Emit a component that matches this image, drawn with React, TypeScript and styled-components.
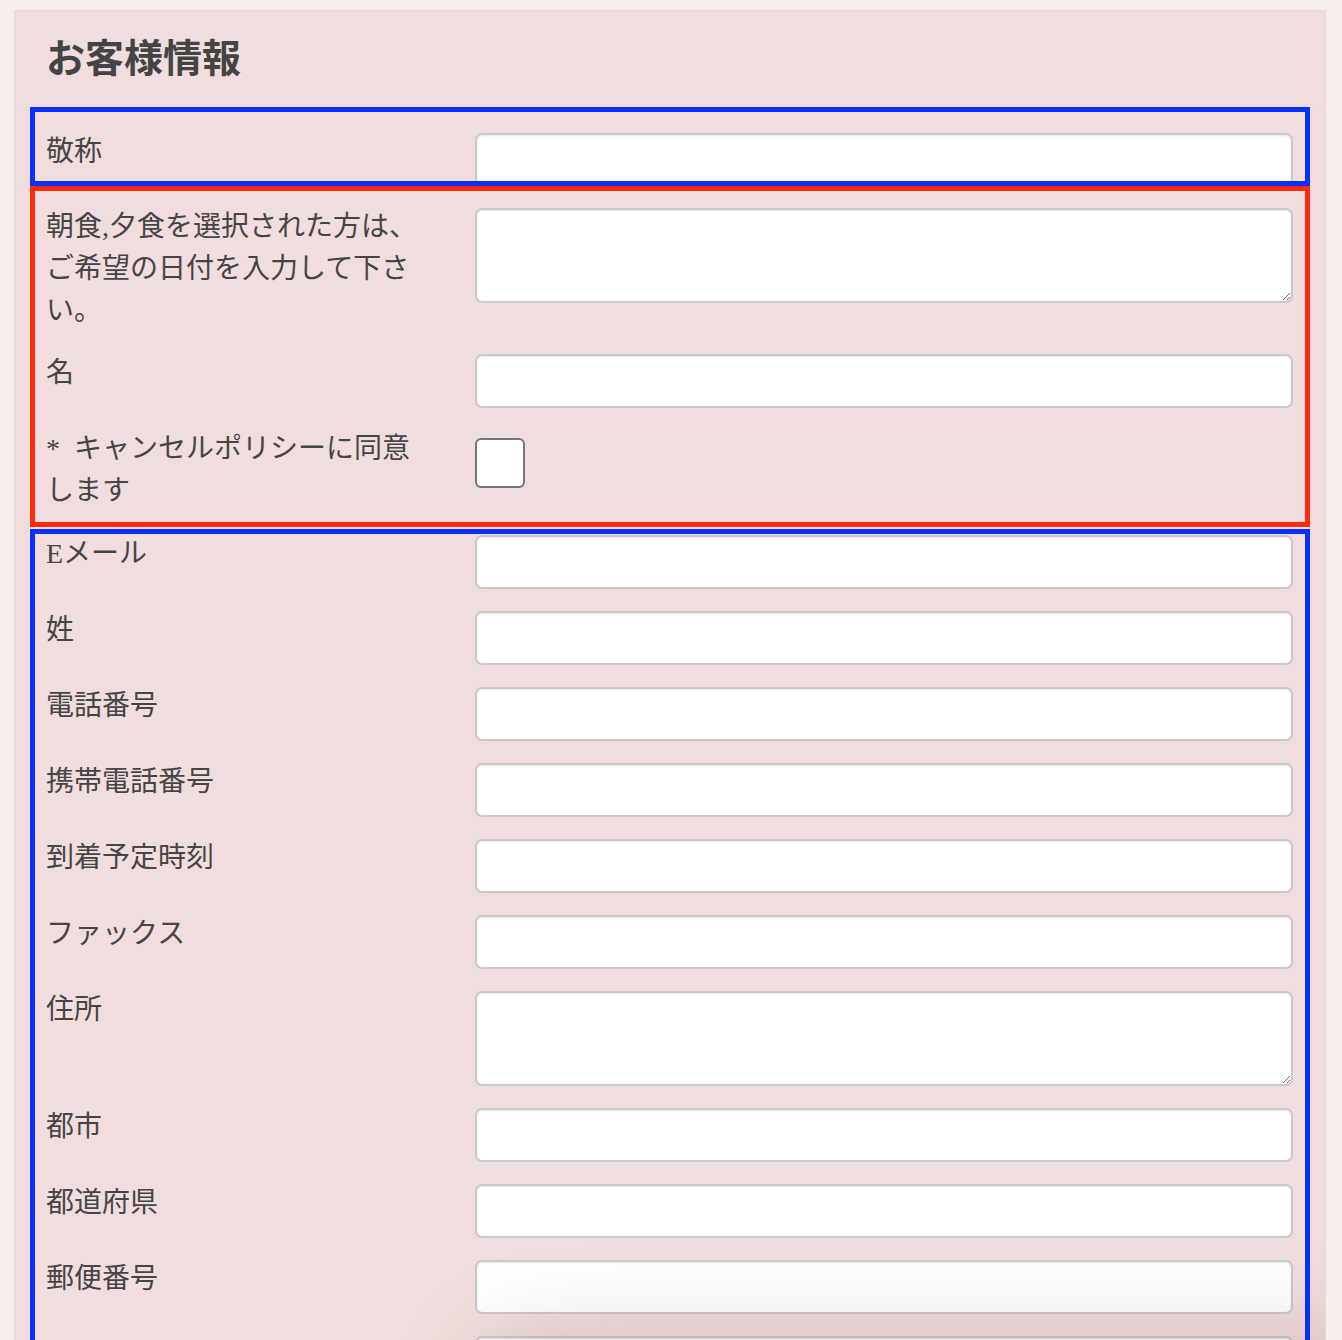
import { createGlobalStyle, styled } from "styled-components";

const GlobalStyle = createGlobalStyle`
    body {
        margin: 0;
        background: #f8eeed;
        font-family: "Liberation Serif", "Noto Sans CJK JP", serif;
        color: #454545;
    }
`;

type Field = {
    label: string;
    kind?: "input" | "textarea" | "checkbox";
};

const topFields: Field[] = [{ label: "敬称" }];

const middleFields: Field[] = [
    { label: "朝食,夕食を選択された方は、ご希望の日付を入力して下さい。", kind: "textarea" },
    { label: "名" },
    { label: "*\u00a0\u00a0キャンセルポリシーに同意します", kind: "checkbox" },
];

// the last row runs past the bottom of the view, its label is not shown
const bottomFields: Field[] = [
    { label: "Eメール" },
    { label: "姓" },
    { label: "電話番号" },
    { label: "携帯電話番号" },
    { label: "到着予定時刻" },
    { label: "ファックス" },
    { label: "住所", kind: "textarea" },
    { label: "都市" },
    { label: "都道府県" },
    { label: "郵便番号" },
    { label: "" },
];

const FieldRow = ({ field }: { field: Field }) => (
    <Row>
        <Label>{field.label}</Label>
        {field.kind === "textarea" ? (
            <TextArea />
        ) : field.kind === "checkbox" ? (
            <CheckBox type="checkbox" />
        ) : (
            <TextInput type="text" />
        )}
    </Row>
);

const App = () => {
    return (
        <>
            <GlobalStyle />
            <Panel>
                <PanelHeader>
                    <Title>お客様情報</Title>
                </PanelHeader>
                <PanelBody>
                    <Section $tone="blue" $pt={21} $pb={0} $height={79}>
                        {topFields.map((f, i) => (
                            <FieldRow key={i} field={f} />
                        ))}
                    </Section>
                    <Section $tone="red" $pt={17} $pb={10}>
                        {middleFields.map((f, i) => (
                            <FieldRow key={i} field={f} />
                        ))}
                    </Section>
                    <Section $tone="blue" $pt={1} $pb={20} $gapTop={2}>
                        {bottomFields.map((f, i) => (
                            <FieldRow key={i} field={f} />
                        ))}
                    </Section>
                </PanelBody>
                <FloatingShadow />
            </Panel>
        </>
    );
};

export default App;

const Panel = styled.div`
    position: relative;
    margin: 10px 0 0 14px;
    width: 1312px;
    box-sizing: border-box;
    background: #f1dddd;
    border: 1px solid #e0d9d8;
    overflow: hidden;
`;

const PanelHeader = styled.header`
    height: 99px;
    border-bottom: 1px solid #e6dcdc;
    box-sizing: border-box;
    padding: 24px 0 0 31px;
`;

const Title = styled.h2`
    margin: 0;
    font-size: 39px;
    line-height: 48px;
    font-weight: 700;
    color: #444;
`;

const PanelBody = styled.div`
    padding: 0 15px;
    margin-top: -3px;
`;

const Section = styled.section<{
    $tone: "blue" | "red";
    $pt: number;
    $pb: number;
    $height?: number;
    $gapTop?: number;
}>`
    border: 5px solid ${(p) => (p.$tone === "blue" ? "#0a30ff" : "#ff2a0a")};
    box-sizing: border-box;
    padding: ${(p) => p.$pt}px 12px ${(p) => p.$pb}px 11px;
    margin-top: ${(p) => p.$gapTop ?? 0}px;
    height: ${(p) => (p.$height ? `${p.$height}px` : "auto")};
    overflow: hidden;
`;

const Row = styled.div`
    display: grid;
    grid-template-columns: 380px 1fr;
    column-gap: 49px;
    align-items: start;
    margin-bottom: 22px;

    &:last-child {
        margin-bottom: 0;
    }
`;

const Label = styled.label`
    margin-top: -2px;
    font-size: 28px;
    line-height: 42px;
    color: #454545;
`;

const TextInput = styled.input`
    display: block;
    width: 100%;
    height: 54px;
    box-sizing: border-box;
    border: 2px solid #cbc8c8;
    border-radius: 7px;
    background: #fff;
    box-shadow: inset 0 1px 2px rgba(0, 0, 0, 0.1);
    font-size: 22px;
    padding: 0 12px;
    outline: none;
`;

const TextArea = styled.textarea`
    display: block;
    width: 100%;
    height: 95px;
    box-sizing: border-box;
    border: 2px solid #cbc8c8;
    border-radius: 7px;
    background: #fff;
    box-shadow: inset 0 1px 2px rgba(0, 0, 0, 0.1);
    font-size: 22px;
    padding: 8px 12px;
    resize: vertical;
    outline: none;
`;

const CheckBox = styled.input`
    appearance: none;
    margin: 8px 0 0;
    width: 50px;
    height: 50px;
    box-sizing: border-box;
    border: 2px solid #757575;
    border-radius: 6px;
    background: #fff;
`;

const FloatingShadow = styled.div`
    position: absolute;
    left: 480px;
    right: -200px;
    top: 1345px;
    height: 200px;
    border-radius: 40px;
    box-shadow: 0 0 100px 10px rgba(80, 40, 40, 0.22);
    pointer-events: none;
`;
